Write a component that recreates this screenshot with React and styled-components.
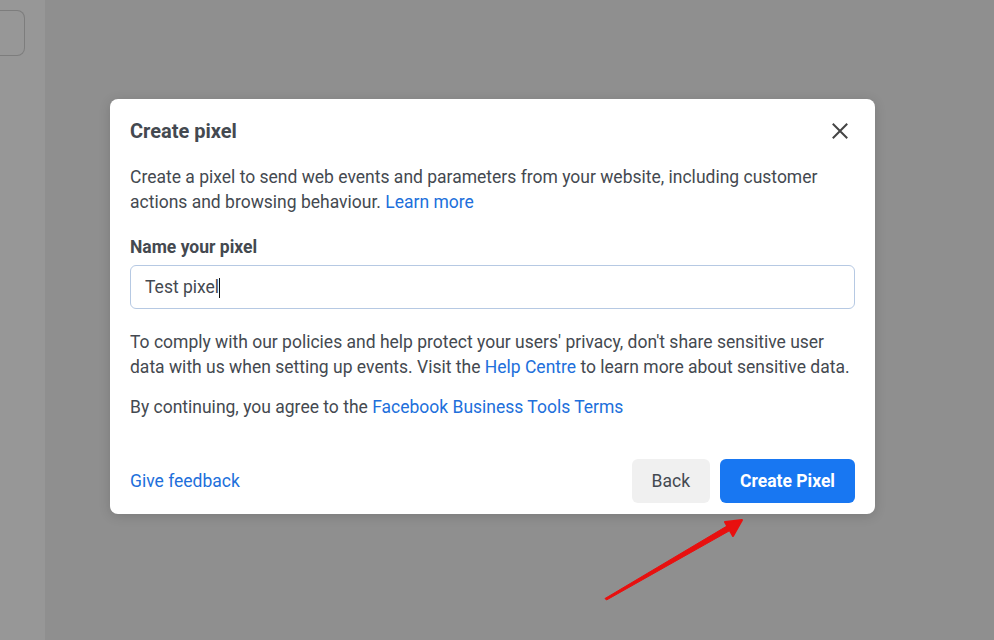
import React, { useState } from 'react';
import styled, { createGlobalStyle } from 'styled-components';

const GlobalStyle = createGlobalStyle`
  html, body {
    margin: 0;
    padding: 0;
    height: 100%;
    overflow: hidden;
  }
  body {
    font-family: Roboto, "Liberation Sans", Arial, sans-serif;
    background: #8f8f8f;
  }
  #root {
    height: 100%;
  }
`;

function App() {
  const [name, setName] = useState('Test pixel');

  return (
    <>
      <GlobalStyle />
      <Page>
        <Sidebar>
          <GhostBox />
        </Sidebar>
        <Main>
          <Modal>
            <Header>
              <Title>Create pixel</Title>
              <CloseButton aria-label="Close">
                <svg width="16" height="16" viewBox="0 0 16 16">
                  <path d="M1.5 1.5 L14.5 14.5 M14.5 1.5 L1.5 14.5" stroke="#444" strokeWidth="2" strokeLinecap="square" />
                </svg>
              </CloseButton>
            </Header>
            <Body>
              <Text>
                Create a pixel to send web events and parameters from your website, including customer
                actions and browsing behaviour. <Link href="#">Learn more</Link>
              </Text>
              <Field>
                <Label>Name your pixel</Label>
                <InputWrap>
                  <Input value={name} onChange={e => setName(e.target.value)} />
                  <Caret />
                </InputWrap>
              </Field>
              <Text>
                To comply with our policies and help protect your users' privacy, don't share sensitive user
                data with us when setting up events. Visit the <Link href="#">Help Centre</Link> to learn more about sensitive data.
              </Text>
              <Text>
                By continuing, you agree to the <Link href="#">Facebook Business Tools Terms</Link>
              </Text>
            </Body>
            <Footer>
              <Link href="#">Give feedback</Link>
              <Actions>
                <Button>Back</Button>
                <Button primary>Create Pixel</Button>
              </Actions>
            </Footer>
          </Modal>
        </Main>
        <Arrow width="994" height="640" viewBox="0 0 994 640">
          <path d="M605 598.5 L606.5 600 L729 531 L727 526 Z" fill="#e8100f" stroke="#e8100f" strokeWidth="1" strokeLinejoin="round" />
          <path d="M742 520 L725 522 L733 536 Z" fill="#e8100f" stroke="#e8100f" strokeWidth="2" strokeLinejoin="round" />
        </Arrow>
      </Page>
    </>
  );
}

export default App;

const Page = styled.div`
  position: relative;
  display: flex;
  height: 640px;
  width: 994px;
`;

const Sidebar = styled.div`
  width: 45px;
  flex-shrink: 0;
  background: #979797;
  padding-top: 10px;
  box-sizing: border-box;
`;

const GhostBox = styled.div`
  width: 24px;
  height: 44px;
  margin-left: -8px;
  padding-left: 8px;
  border: 1px solid #7d7d7d;
  border-left: none;
  border-radius: 0 8px 8px 0;
`;

const Main = styled.div`
  flex: 1;
  padding: 99px 0 0 65px;
`;

const Modal = styled.div`
  width: 765px;
  background: #fff;
  border-radius: 8px;
  box-shadow: 0 2px 12px rgba(0, 0, 0, 0.15);
  padding: 0 20px 11px;
  box-sizing: border-box;
`;

const Header = styled.div`
  display: flex;
  align-items: center;
  justify-content: space-between;
  height: 64px;
`;

const Title = styled.h2`
  margin: 0;
  font-size: 20px;
  font-weight: 700;
  color: #444950;
`;

const CloseButton = styled.button`
  border: none;
  background: none;
  padding: 0;
  margin-right: 7px;
  display: flex;
  cursor: pointer;
`;

const Body = styled.div`
  display: flex;
  flex-direction: column;
  gap: 15px;
  margin-top: 2px;
`;

const Text = styled.p`
  margin: 0;
  font-size: 17.5px;
  line-height: 25px;
  color: #444950;
`;

const Link = styled.a`
  color: #216fdb;
  text-decoration: none;
  font-size: inherit;
  line-height: inherit;
`;

const Field = styled.div`
  display: flex;
  flex-direction: column;
  gap: 7px;
  margin: 6px 0 6px;
`;

const Label = styled.label`
  font-size: 17.5px;
  font-weight: 700;
  line-height: 22px;
  color: #444950;
`;

const InputWrap = styled.div`
  position: relative;
  display: flex;
  align-items: center;
  height: 44px;
  border: 1px solid #b6c9e3;
  border-radius: 6px;
  box-sizing: border-box;
  padding: 0 14px;
`;

const Input = styled.input`
  border: none;
  outline: none;
  flex: 1;
  font-family: inherit;
  font-size: 17.5px;
  color: #444950;
  padding: 0;
  caret-color: transparent;
`;

const Caret = styled.span`
  position: absolute;
  left: 88px;
  top: 12px;
  width: 1px;
  height: 20px;
  background: #111;
`;

const Footer = styled.div`
  display: flex;
  align-items: center;
  justify-content: space-between;
  margin-top: 39px;
  font-size: 17.5px;
`;

const Actions = styled.div`
  display: flex;
  gap: 10px;
`;

const Button = styled.button`
  height: 44px;
  border: none;
  border-radius: 6px;
  font-family: inherit;
  font-size: 17.5px;
  padding: 0 20px;
  background: ${p => (p.primary ? '#1877f2' : '#f0f0f0')};
  color: ${p => (p.primary ? '#fff' : '#444950')};
  font-weight: ${p => (p.primary ? 700 : 400)};
  cursor: pointer;
`;

const Arrow = styled.svg`
  position: absolute;
  left: 0;
  top: 0;
  pointer-events: none;
`;
